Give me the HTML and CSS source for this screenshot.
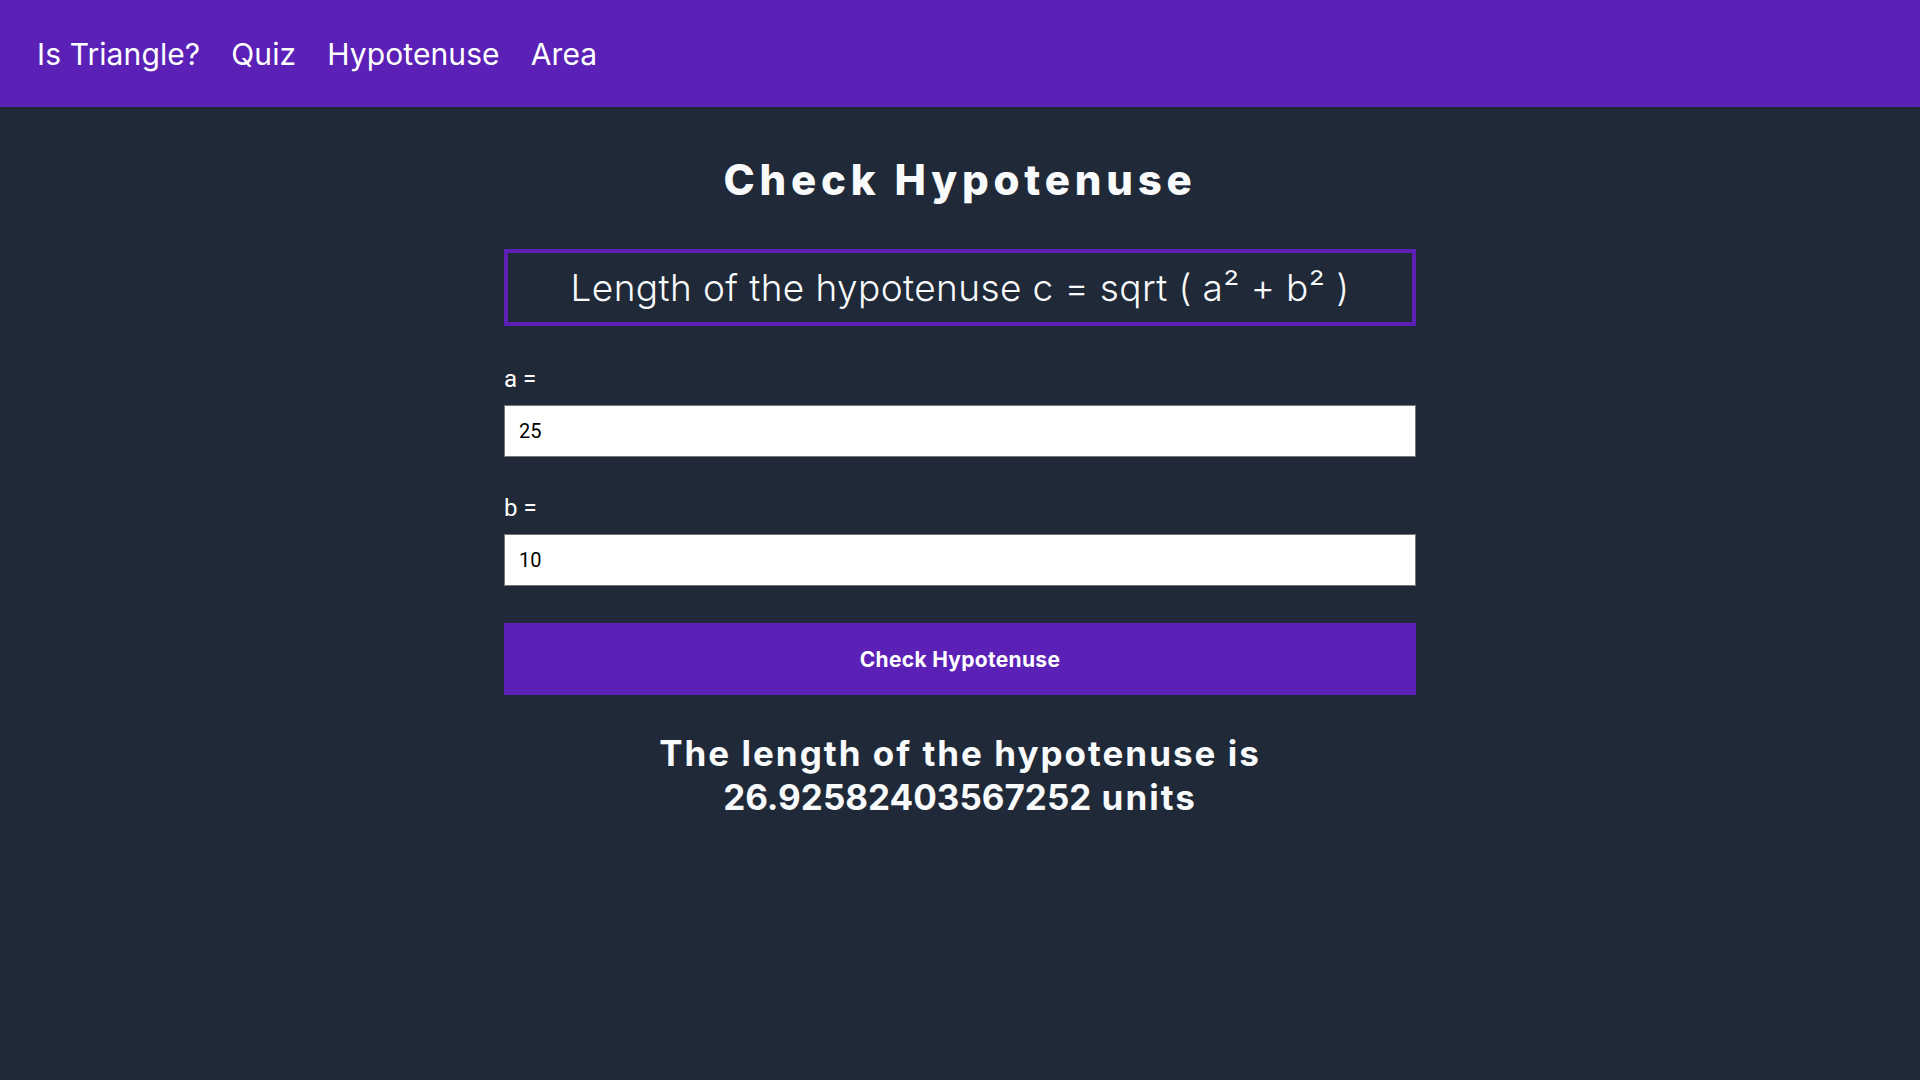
FILE: index.html
```html
<!DOCTYPE html>
<html lang="en">
<head>
<meta charset="utf-8">
<title>Check Hypotenuse</title>
<link rel="stylesheet" href="styles.css">
</head>
<body>
<nav class="navbar">
  <a class="nav-link" href="#">Is Triangle?</a>
  <a class="nav-link" href="#">Quiz</a>
  <a class="nav-link" href="#">Hypotenuse</a>
  <a class="nav-link" href="#">Area</a>
</nav>
<main class="container">
  <h1 class="title">Check Hypotenuse</h1>
  <div class="formula">Length of the hypotenuse c = sqrt ( a² + b² )</div>
  <div class="field">
    <label class="field-label" for="a">a =</label>
    <input class="field-input" id="a" type="number" value="25">
  </div>
  <div class="field">
    <label class="field-label" for="b">b =</label>
    <input class="field-input" id="b" type="number" value="10">
  </div>
  <button class="btn">Check Hypotenuse</button>
  <p class="result">The length of the hypotenuse is <span class="result-num">26.92582403567252</span> units</p>
</main>
</body>
</html>
```
FILE: styles.css
```css
* { box-sizing: border-box; }
html, body { margin: 0; padding: 0; }
body {
  background: #1f2937;
  color: #f8fafc;
  font-family: Inter, "Open Sans", sans-serif;
  min-height: 100vh;
}
.navbar {
  height: 107px;
  background: #5b21b6;
  display: flex;
  align-items: center;
  padding-left: 37px;
  gap: 31px;
}
.nav-link {
  color: #ffffff;
  text-decoration: none;
  font-size: 30px;
  font-weight: 400;
  letter-spacing: 0.1px;
}
.container {
  width: 912px;
  margin: 0 auto;
  display: flex;
  flex-direction: column;
}
.title {
  margin: 48px 0 0;
  font-size: 42px;
  line-height: 50px;
  font-weight: 800;
  text-align: center;
  letter-spacing: 4.8px;
}
.formula {
  margin-top: 44px;
  height: 77px;
  border: 4px solid #5b21b6;
  font-size: 37px;
  line-height: 69px;
  font-weight: 300;
  text-align: center;
  letter-spacing: 0.4px;
}
.field {
  display: flex;
  flex-direction: column;
  margin-top: 39px;
}
.field + .field { margin-top: 37px; }
.field-label {
  font-family: Roboto, "Liberation Sans", sans-serif;
  font-size: 24px;
  line-height: 28px;
  color: #ffffff;
  margin-bottom: 12px;
}
.field-input {
  height: 52px;
  border: 1px solid #767676;
  background: #ffffff;
  padding: 0 14px;
  font-family: Roboto, "Liberation Sans", sans-serif;
  font-size: 20px;
  color: #000000;
  outline: none;
  -moz-appearance: textfield;
}
.field-input::-webkit-outer-spin-button,
.field-input::-webkit-inner-spin-button { -webkit-appearance: none; margin: 0; }
.btn {
  margin-top: 37px;
  height: 72px;
  border: none;
  background: #5b21b6;
  color: #ffffff;
  font-family: Inter, "Open Sans", sans-serif;
  font-size: 21px;
  font-weight: 700;
  letter-spacing: 0.3px;
  cursor: pointer;
}
.result {
  margin: 36px 0 0;
  font-size: 35px;
  line-height: 44px;
  font-weight: 700;
  text-align: center;
  letter-spacing: 2px;
}
.result-num {
  letter-spacing: 0;
}
```
